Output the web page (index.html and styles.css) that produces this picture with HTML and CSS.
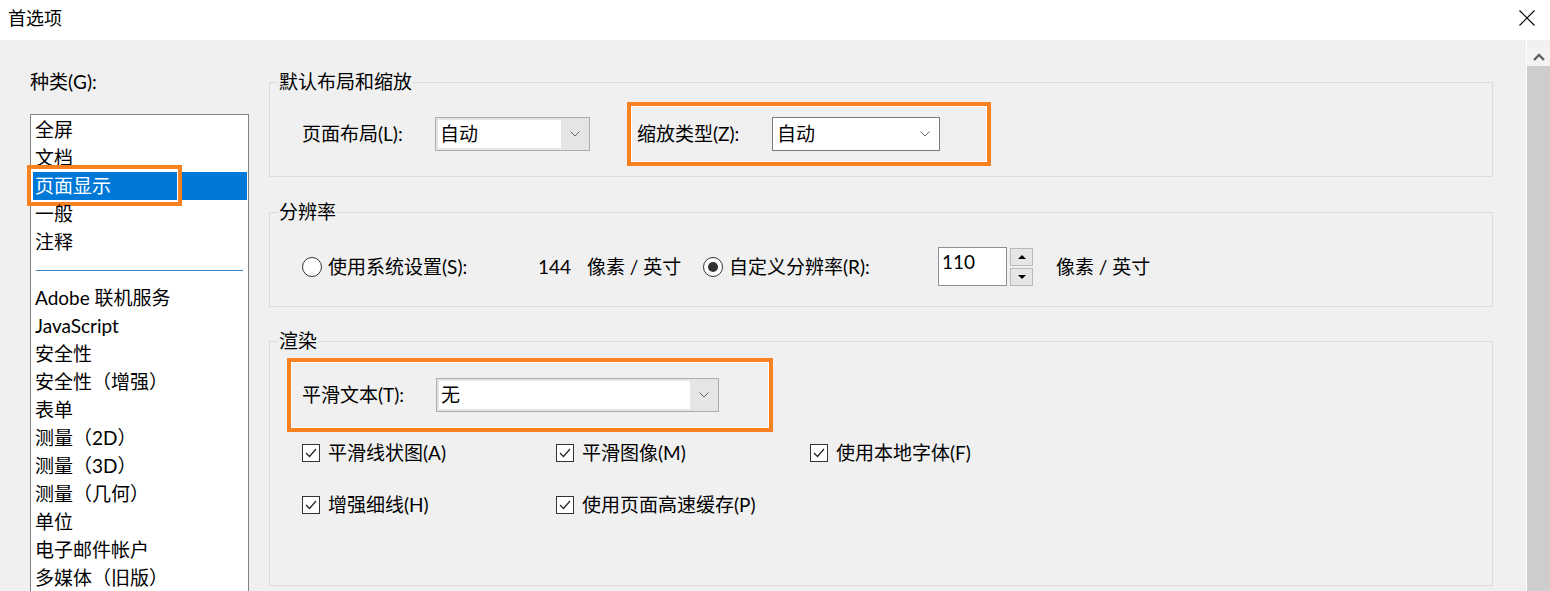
FILE: index.html
```html
<!DOCTYPE html>
<html lang="zh-CN">
<head>
    <meta charset="UTF-8">
    <title>首选项</title>
    <link rel="stylesheet" href="styles.css">
</head>
<body>
    <div class="titlebar">
        <span class="title">首选项</span>
        <svg class="close" width="16" height="16" viewBox="0 0 16 16">
            <path d="M0.5 0.5 L15.5 15.5 M15.5 0.5 L0.5 15.5" stroke="#000" stroke-width="1.1" fill="none"/>
        </svg>
    </div>

    <div class="main">
        <div class="sidebar">
            <div class="cat-label">种类(G):</div>
            <ul class="catlist">
                <li>全屏</li>
                <li>文档</li>
                <li class="selected">页面显示<div class="mark mark-list"></div></li>
                <li>一般</li>
                <li>注释</li>
                <li class="sep"><div class="sep-line"></div></li>
                <li>Adobe 联机服务</li>
                <li>JavaScript</li>
                <li>安全性</li>
                <li>安全性（增强）</li>
                <li>表单</li>
                <li>测量（2D）</li>
                <li>测量（3D）</li>
                <li>测量（几何）</li>
                <li>单位</li>
                <li>电子邮件帐户</li>
                <li>多媒体（旧版）</li>
            </ul>
        </div>

        <div class="panel">
            <fieldset class="group">
                <legend>默认布局和缩放</legend>
                <div class="row row-layout">
                    <span class="lbl lbl-layout">页面布局(L):</span>
                    <div class="combo combo-gray combo-layout">
                        <span class="field">自动</span>
                        <span class="drop"><svg width="10" height="6" viewBox="0 0 10 6"><polyline points="0.5,0.5 5,5 9.5,0.5" stroke="#666" fill="none"/></svg></span>
                    </div>
                    <div class="mark mark-zoom">
                        <span class="lbl lbl-zoom">缩放类型(Z):</span>
                        <div class="combo combo-white combo-zoom">
                            <span class="field">自动</span>
                            <span class="drop"><svg width="10" height="6" viewBox="0 0 10 6"><polyline points="0.5,0.5 5,5 9.5,0.5" stroke="#666" fill="none"/></svg></span>
                        </div>
                    </div>
                </div>
            </fieldset>

            <fieldset class="group group-res">
                <legend>分辨率</legend>
                <div class="row row-res">
                    <span class="radio"></span>
                    <span class="lbl lbl-sys">使用系统设置(S):</span>
                    <span class="lbl lbl-num">144</span>
                    <span class="lbl lbl-unit">像素 / 英寸</span>
                    <span class="radio on"></span>
                    <span class="lbl lbl-custom">自定义分辨率(R):</span>
                    <span class="spin-input">110</span>
                    <span class="spin-btns">
                        <span class="spin-btn"><svg width="8" height="4" viewBox="0 0 8 4"><polygon points="0,4 4,0 8,4" fill="#000"/></svg></span>
                        <span class="spin-btn"><svg width="8" height="4" viewBox="0 0 8 4"><polygon points="0,0 8,0 4,4" fill="#000"/></svg></span>
                    </span>
                    <span class="lbl lbl-unit2">像素 / 英寸</span>
                </div>
            </fieldset>

            <fieldset class="group group-render">
                <legend>渲染</legend>
                <div class="row row-smooth">
                    <div class="mark mark-smooth">
                        <span class="lbl lbl-smooth">平滑文本(T):</span>
                        <div class="combo combo-gray combo-smooth">
                            <span class="field">无</span>
                            <span class="drop"><svg width="10" height="6" viewBox="0 0 10 6"><polyline points="0.5,0.5 5,5 9.5,0.5" stroke="#666" fill="none"/></svg></span>
                        </div>
                    </div>
                </div>
                <div class="checks">
                    <div class="check"><span class="cbox"><svg width="14" height="14" viewBox="0 0 14 14"><polyline points="2,7 5.5,10.5 12,3" stroke="#222" stroke-width="1.2" fill="none"/></svg></span>平滑线状图(A)</div>
                    <div class="check"><span class="cbox"><svg width="14" height="14" viewBox="0 0 14 14"><polyline points="2,7 5.5,10.5 12,3" stroke="#222" stroke-width="1.2" fill="none"/></svg></span>平滑图像(M)</div>
                    <div class="check"><span class="cbox"><svg width="14" height="14" viewBox="0 0 14 14"><polyline points="2,7 5.5,10.5 12,3" stroke="#222" stroke-width="1.2" fill="none"/></svg></span>使用本地字体(F)</div>
                    <div class="check"><span class="cbox"><svg width="14" height="14" viewBox="0 0 14 14"><polyline points="2,7 5.5,10.5 12,3" stroke="#222" stroke-width="1.2" fill="none"/></svg></span>增强细线(H)</div>
                    <div class="check"><span class="cbox"><svg width="14" height="14" viewBox="0 0 14 14"><polyline points="2,7 5.5,10.5 12,3" stroke="#222" stroke-width="1.2" fill="none"/></svg></span>使用页面高速缓存(P)</div>
                </div>
            </fieldset>
        </div>

        <div class="scrollbar">
            <div class="sb-btn">
                <svg width="12" height="8" viewBox="0 0 12 8"><polyline points="1,7 6,2 11,7" stroke="#606060" stroke-width="2.4" fill="none"/></svg>
            </div>
            <div class="sb-track"></div>
        </div>
    </div>
</body>
</html>
```

FILE: styles.css
```css
body {
    margin: 0;
    width: 1550px;
    height: 591px;
    overflow: hidden;
    background-color: #f0f0f0;
    font-family: "Lato", "Noto Sans CJK SC", sans-serif;
    font-size: 19px;
    color: #000;
}

/* title bar */
.titlebar {
    height: 40px;
    box-sizing: border-box;
    padding: 0 15px 4px 8px;
    background-color: #fff;
    display: flex;
    align-items: center;
    justify-content: space-between;
}
.title {
    font-size: 18px;
    line-height: 24px;
}

.main {
    display: flex;
    height: 551px;
    overflow: hidden;
}

/* category list */
.sidebar {
    width: 269px;
    box-sizing: border-box;
    padding: 28px 0 0 30px;
    flex-shrink: 0;
}
.cat-label {
    line-height: 28px;
    margin-bottom: 18px;
}
.catlist {
    list-style: none;
    margin: 0;
    padding: 1px 1px 0 2px;
    width: 219px;
    height: 520px;
    box-sizing: border-box;
    border: 1px solid #828282;
    background-color: #fff;
}
.catlist li {
    position: relative;
    height: 28px;
    line-height: 28px;
    padding-left: 2px;
    white-space: nowrap;
}
.catlist li.selected {
    background-color: #0078d7;
    color: #fff;
}
.catlist li.sep {
    display: flex;
    align-items: center;
    padding-left: 3px;
    padding-right: 4px;
}
.sep-line {
    flex: 1;
    height: 1px;
    background-color: #3f86c4;
}

/* orange highlight frames */
.mark {
    border: 4px solid #f7821f;
    box-shadow: inset 0 0 0 1px #fff;
    box-sizing: border-box;
}
.mark-list {
    position: absolute;
    left: -6px;
    top: -7px;
    width: 155px;
    height: 41px;
}

/* settings panel */
.panel {
    width: 1224px;
    flex-shrink: 0;
    padding-top: 31px;
}
.group {
    margin: 0;
    padding: 0;
    min-width: 0;
    border: 1px solid #dcdcdc;
}
.group legend {
    margin-left: 8px;
    padding: 0 1px;
    line-height: 22px;
}
.group-res {
    margin-top: 24px;
}
.group-render {
    margin-top: 23px;
}

.row {
    display: flex;
    align-items: center;
}
.lbl {
    line-height: 28px;
    white-space: nowrap;
    flex-shrink: 0;
}

.row-layout {
    padding: 9px 0 10px 32px;
}
.lbl-layout { width: 133px; }
.mark-zoom {
    display: flex;
    align-items: center;
    margin-left: 37px;
    padding: 11px 47px 11px 6px;
}
.lbl-zoom { width: 135px; }

/* combo boxes */
.combo {
    display: flex;
    height: 34px;
    box-sizing: border-box;
    border: 1px solid;
    flex-shrink: 0;
}
.combo .field {
    flex: 1;
    line-height: 28px;
}
.combo .drop {
    width: 28px;
    display: flex;
    align-items: center;
    justify-content: center;
}
.combo-gray {
    border-color: #adadad;
    background-color: #e5e5e5;
    padding: 2px 0 2px 2px;
}
.combo-gray .field {
    background-color: #fff;
    padding-left: 2px;
}
.combo-white {
    border-color: #7a7a7a;
    background-color: #fff;
    padding: 2px 0 2px 4px;
}
.combo-layout { width: 155px; }
.combo-zoom { width: 168px; }
.combo-smooth { width: 283px; }

/* resolution */
.row-res {
    padding: 24px 0 20px 32px;
}
.radio {
    width: 20px;
    height: 20px;
    box-sizing: border-box;
    border: 1px solid #333;
    border-radius: 50%;
    background-color: #fff;
    margin-right: 6px;
    display: flex;
    align-items: center;
    justify-content: center;
    flex-shrink: 0;
}
.radio.on::after {
    content: "";
    width: 10px;
    height: 10px;
    border-radius: 50%;
    background-color: #333;
}
.lbl-sys { width: 210px; }
.lbl-num { width: 49px; }
.lbl-unit { width: 116px; }
.lbl-custom { width: 209px; }
.spin-input {
    width: 69px;
    height: 39px;
    box-sizing: border-box;
    border: 1px solid #8f8f8f;
    background-color: #fff;
    padding: 1px 3px;
    line-height: 26px;
    align-self: flex-start;
}
.spin-btns {
    display: flex;
    flex-direction: column;
    gap: 2px;
    margin-left: 3px;
}
.spin-btn {
    width: 23px;
    height: 18px;
    box-sizing: border-box;
    border: 1px solid #b9b9b9;
    background-color: #e6e6e6;
    display: flex;
    align-items: center;
    justify-content: center;
}
.lbl-unit2 { margin-left: 23px; }

/* rendering */
.row-smooth {
    padding: 6px 0 0 17px;
}
.mark-smooth {
    display: flex;
    align-items: center;
    padding: 16px 50px 16px 11px;
}
.lbl-smooth { width: 134px; }

.checks {
    display: grid;
    grid-template-columns: repeat(3, 254px);
    row-gap: 32px;
    padding: 11px 0 70px 32px;
}
.check {
    height: 20px;
    display: flex;
    align-items: center;
    white-space: nowrap;
    line-height: 28px;
}
.cbox {
    width: 18px;
    height: 18px;
    box-sizing: border-box;
    border: 1px solid #333;
    background-color: #fff;
    margin-right: 8px;
    display: flex;
    align-items: center;
    justify-content: center;
    flex-shrink: 0;
}

/* scrollbar */
.scrollbar {
    margin-left: auto;
    width: 24px;
    box-sizing: border-box;
    border-left: 1px solid #fff;
    padding-top: 7px;
    display: flex;
    flex-direction: column;
}
.sb-btn {
    height: 19px;
    background-color: #f3f3f3;
    display: flex;
    align-items: center;
    justify-content: center;
}
.sb-track {
    flex: 1;
    background-color: #cdcdcd;
}
```
